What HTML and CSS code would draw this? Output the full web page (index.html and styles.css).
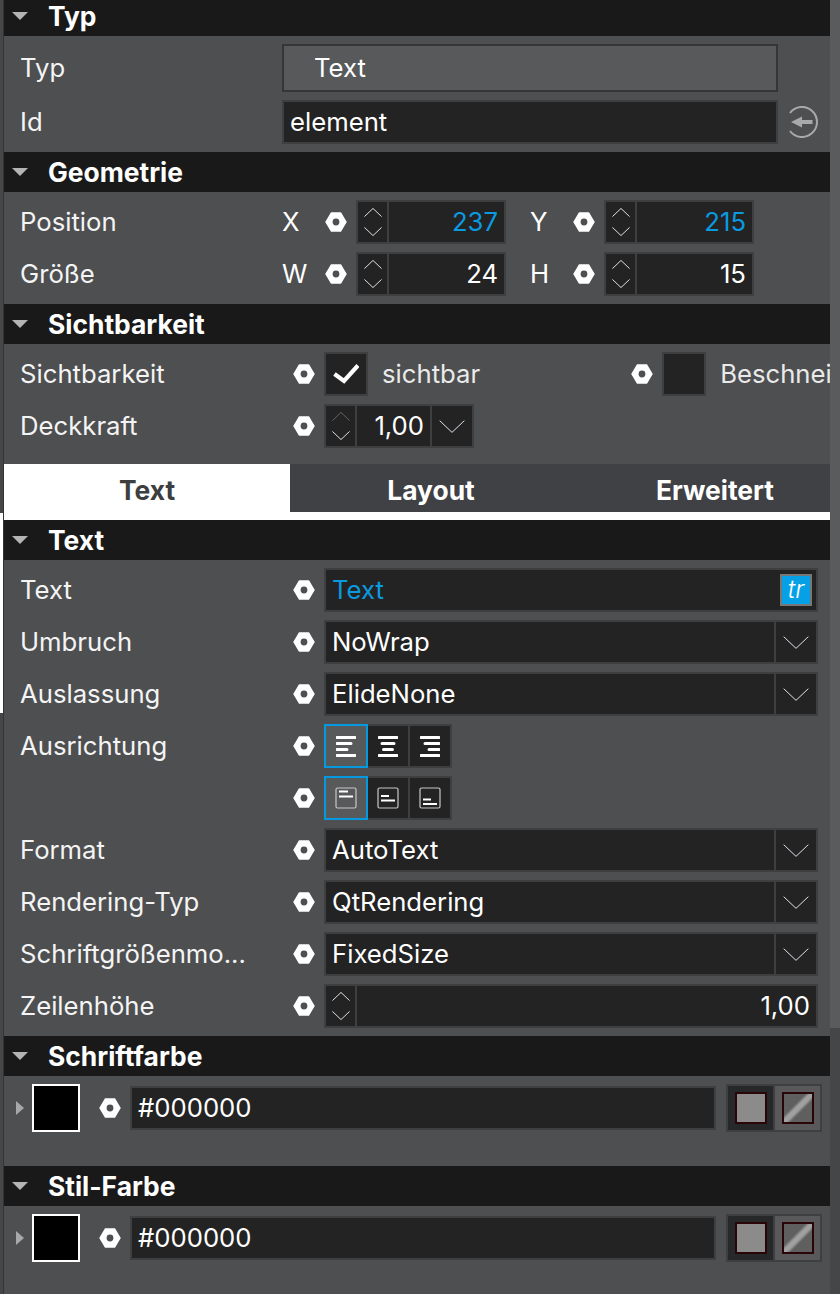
FILE: index.html
```html
<!DOCTYPE html>
<html lang="de">
<head>
<meta charset="utf-8">
<title>Eigenschaften</title>
<link rel="stylesheet" href="styles.css">
</head>
<body>
<svg class="defs" width="0" height="0" aria-hidden="true">
  <defs>
    <symbol id="hex" viewBox="0 0 22 20"><path fill-rule="evenodd" fill="#fff" d="M6 .3h10L21.8 10 16 19.7H6L.2 10zM11 6.600a3.400 3.400 0 1 0 0 6.800 3.400 3.400 0 0 0 0-6.800z"/></symbol>
    <symbol id="up" viewBox="0 0 20 10"><path fill="none" stroke="currentColor" stroke-width="1" vector-effect="non-scaling-stroke" d="M.5 9.500 10 .5l9.500 9"/></symbol>
    <symbol id="down" viewBox="0 0 20 10"><path fill="none" stroke="currentColor" stroke-width="1" vector-effect="non-scaling-stroke" d="M.5 .5l9.500 9 9.500-9"/></symbol>
    <symbol id="caret" viewBox="0 0 16 8"><path fill="#b4b4b4" d="M0 0h16L8 8z"/></symbol>
    <symbol id="side" viewBox="0 0 8 14"><path fill="#a8a8a8" d="M0 0l8 7-8 7z"/></symbol>
  </defs>
</svg>
<main class="panel">
  <section>
    <h2 class="head head-top"><svg class="caret"><use href="#caret"/></svg>Typ</h2>
    <div class="body">
      <div class="row row-type"><span class="label label-wide">Typ</span><div class="field field-type">Text</div></div>
      <div class="row"><span class="label label-wide">Id</span><div class="field field-id">element</div>
        <svg class="reset" viewBox="0 0 32 32"><path fill="none" stroke="#a9a9a9" stroke-width="2" d="M4 7A15 15 0 1 1 4 25"/><path fill="#a9a9a9" d="M5 16l11-5.500V14H26.500V18H16V21.500z"/></svg>
      </div>
    </div>
  </section>
  <section>
    <h2 class="head"><svg class="caret"><use href="#caret"/></svg>Geometrie</h2>
    <div class="body">
      <div class="row"><span class="label label-wide">Position</span>
        <span class="axis">X</span><svg class="hex"><use href="#hex"/></svg>
        <div class="spin spin-xy"><span class="arrows"><svg><use href="#up"/></svg><svg><use href="#down"/></svg></span><span class="num blue">237</span></div>
        <span class="axis axis-2">Y</span><svg class="hex"><use href="#hex"/></svg>
        <div class="spin spin-xy"><span class="arrows"><svg><use href="#up"/></svg><svg><use href="#down"/></svg></span><span class="num blue">215</span></div>
      </div>
      <div class="row"><span class="label label-wide">Größe</span>
        <span class="axis">W</span><svg class="hex"><use href="#hex"/></svg>
        <div class="spin spin-xy"><span class="arrows"><svg><use href="#up"/></svg><svg><use href="#down"/></svg></span><span class="num">24</span></div>
        <span class="axis axis-2">H</span><svg class="hex"><use href="#hex"/></svg>
        <div class="spin spin-xy"><span class="arrows"><svg><use href="#up"/></svg><svg><use href="#down"/></svg></span><span class="num">15</span></div>
      </div>
    </div>
  </section>
  <section>
    <h2 class="head"><svg class="caret"><use href="#caret"/></svg>Sichtbarkeit</h2>
    <div class="body body-vis">
      <div class="row"><span class="label">Sichtbarkeit</span><svg class="hex"><use href="#hex"/></svg>
        <div class="check"><svg viewBox="0 0 26 20"><path fill="none" stroke="#fff" stroke-width="4.200" d="M1.500 10 11 17 25 1.500"/></svg></div>
        <span class="check-label">sichtbar</span>
        <svg class="hex hex-clip"><use href="#hex"/></svg>
        <div class="check"></div>
        <span class="check-label">Beschnei</span>
      </div>
      <div class="row"><span class="label">Deckkraft</span><svg class="hex"><use href="#hex"/></svg>
        <div class="spin spin-op"><span class="arrows"><svg class="dim"><use href="#up"/></svg><svg><use href="#down"/></svg></span><span class="num">1,00</span><span class="drop"><svg><use href="#down"/></svg></span></div>
      </div>
    </div>
  </section>
  <nav class="tabs">
    <span class="tab active">Text</span><span class="tab tab-mid">Layout</span><span class="tab">Erweitert</span>
  </nav>
  <section>
    <h2 class="head"><svg class="caret"><use href="#caret"/></svg>Text</h2>
    <div class="body">
      <div class="row"><span class="label">Text</span><svg class="hex"><use href="#hex"/></svg><div class="field field-text blue">Text<span class="tr">tr</span></div></div>
      <div class="row"><span class="label">Umbruch</span><svg class="hex"><use href="#hex"/></svg><div class="combo"><span class="combo-val">NoWrap</span><span class="drop"><svg><use href="#down"/></svg></span></div></div>
      <div class="row"><span class="label">Auslassung</span><svg class="hex"><use href="#hex"/></svg><div class="combo"><span class="combo-val">ElideNone</span><span class="drop"><svg><use href="#down"/></svg></span></div></div>
      <div class="row"><span class="label">Ausrichtung</span><svg class="hex"><use href="#hex"/></svg>
        <div class="btns">
          <span class="btn on"><svg viewBox="0 0 20 21"><path d="M1 1.500h18M1 7.500h14M1 13.500h10M1 19.500h18"/></svg></span>
          <span class="btn"><svg viewBox="0 0 20 21"><path d="M1 1.500h18M4 7.500h12M5.500 13.500h9M1 19.500h18"/></svg></span>
          <span class="btn"><svg viewBox="0 0 20 21"><path d="M1 1.500h18M5 7.500h14M9 13.500h10M1 19.500h18"/></svg></span>
        </div>
      </div>
      <div class="row"><span class="label"></span><svg class="hex"><use href="#hex"/></svg>
        <div class="btns">
          <span class="btn on"><svg class="box" viewBox="0 0 22 22"><rect x="1" y="1" width="20" height="20" rx="1.500"/><path class="l" d="M4 4.500h9M4 9.500h14"/></svg></span>
          <span class="btn"><svg class="box" viewBox="0 0 22 22"><rect x="1" y="1" width="20" height="20" rx="1.500"/><path class="l" d="M4 9h8M4 13.500h14"/></svg></span>
          <span class="btn"><svg class="box" viewBox="0 0 22 22"><rect x="1" y="1" width="20" height="20" rx="1.500"/><path class="l" d="M4 12.500h8M4 17h14"/></svg></span>
        </div>
      </div>
      <div class="row"><span class="label">Format</span><svg class="hex"><use href="#hex"/></svg><div class="combo"><span class="combo-val">AutoText</span><span class="drop"><svg><use href="#down"/></svg></span></div></div>
      <div class="row"><span class="label">Rendering-Typ</span><svg class="hex"><use href="#hex"/></svg><div class="combo"><span class="combo-val">QtRendering</span><span class="drop"><svg><use href="#down"/></svg></span></div></div>
      <div class="row"><span class="label">Schriftgrößenmo...</span><svg class="hex"><use href="#hex"/></svg><div class="combo"><span class="combo-val">FixedSize</span><span class="drop"><svg><use href="#down"/></svg></span></div></div>
      <div class="row"><span class="label">Zeilenhöhe</span><svg class="hex"><use href="#hex"/></svg><div class="spin spin-full"><span class="arrows"><svg><use href="#up"/></svg><svg><use href="#down"/></svg></span><span class="num">1,00</span></div></div>
    </div>
  </section>
  <section>
    <h2 class="head"><svg class="caret"><use href="#caret"/></svg>Schriftfarbe</h2>
    <div class="body body-color">
      <div class="color-row">
        <svg class="side"><use href="#side"/></svg><span class="swatch"></span><svg class="hex hex-color"><use href="#hex"/></svg>
        <div class="field field-color">#000000</div>
        <div class="modes"><span class="mode sel"><i class="chip"></i></span><span class="mode"><i class="chip chip-grad"></i></span></div>
      </div>
    </div>
  </section>
  <section>
    <h2 class="head"><svg class="caret"><use href="#caret"/></svg>Stil-Farbe</h2>
    <div class="body body-color">
      <div class="color-row">
        <svg class="side"><use href="#side"/></svg><span class="swatch"></span><svg class="hex hex-color"><use href="#hex"/></svg>
        <div class="field field-color">#000000</div>
        <div class="modes"><span class="mode sel"><i class="chip"></i></span><span class="mode"><i class="chip chip-grad"></i></span></div>
      </div>
    </div>
  </section>
</main>
</body>
</html>
```

FILE: styles.css
```css
* { box-sizing: border-box; }
html, body { margin: 0; padding: 0; height: 1294px; overflow: hidden; }
body {
  position: relative;
  background: #454648;
  font-family: Inter, "Noto Sans", sans-serif;
  font-size: 25.7px;
  color: #fff;
}
/* window-edge slivers and the scrollbar handle that lie over the backdrop */
body::before {
  content: "";
  position: absolute;
  left: 0;
  top: 513px;
  width: 3px;
  height: 200px;
  background: #fff;
}
body::after {
  content: "";
  position: absolute;
  right: 0;
  top: 0;
  width: 10px;
  height: 1028px;
  background: #5a5b5d;
}
.defs { position: absolute; }
.panel {
  width: 827px;
  height: 1294px;
  margin-left: 3px;
  border-left: 1px solid #333436;
  background: #4e4f51;
  overflow: hidden;
}
.head {
  display: flex;
  align-items: center;
  height: 40px;
  margin: 0;
  padding-left: 8px;
  background: #191919;
  font-size: 26.4px;
  font-weight: 700;
}
.head-top { height: 36px; padding-bottom: 4px; }
.caret { width: 16px; height: 8px; margin-right: 20px; flex: none; }
.body { display: flex; flex-direction: column; gap: 8px; padding: 8px 0; }
.body-vis { padding-bottom: 16px; }
.body-color { padding: 8px 0 34px; }
.row { display: flex; align-items: center; height: 44px; padding-left: 16px; overflow: hidden; }
.row-type { height: 48px; }
.label { width: 272px; flex: none; padding-bottom: 2px; color: #f4f4f4; white-space: nowrap; }
.label-wide { width: 262px; }
.hex { width: 22px; height: 20px; flex: none; margin: 0 9px 0 1px; }
.axis { width: 42px; flex: none; padding-bottom: 2px; }
.axis-2 { margin-left: 24px; }
.field {
  display: flex;
  align-items: center;
  flex: none;
  height: 44px;
  border: 2px solid #3e3f41;
  background: #232323;
  padding: 0 0 2px 6px;
}
.field-type { width: 496px; height: 48px; padding-left: 30px; background: #58595b; border-color: #353638; }
.field-id { width: 496px; }
.reset { width: 32px; height: 32px; margin-left: 8px; flex: none; }
.field-text { width: 494px; position: relative; }
.blue { color: #0a9ae0; }
.tr {
  position: absolute;
  right: 4px;
  top: 4px;
  width: 32px;
  height: 32px;
  border: 2px solid #777;
  background: #05a0e6;
  color: #fff;
  font-style: italic;
  font-size: 25px;
  font-weight: 300;
  line-height: 26px;
  text-align: center;
}
.spin {
  display: flex;
  flex: none;
  height: 44px;
  border: 2px solid #3e3f41;
  background: #3e3f41;
  gap: 2px;
}
.spin-xy { width: 150px; }
.spin-op { width: 150px; }
.spin-full { width: 494px; }
.arrows {
  width: 29px;
  flex: none;
  background: #232323;
  display: flex;
  flex-direction: column;
  align-items: center;
  justify-content: center;
  gap: 10px;
  color: #e0e0e0;
}
.arrows svg { width: 18px; height: 9px; display: block; }
.arrows .dim { color: #666; }
.num { flex: 1; background: #232323; text-align: right; padding-right: 6px; line-height: 40px; }
.drop {
  width: 40px;
  flex: none;
  background: #232323;
  display: flex;
  align-items: center;
  justify-content: center;
  color: #dfe4ea;
}
.drop svg { width: 26px; height: 13px; display: block; }
.check {
  width: 44px;
  height: 44px;
  flex: none;
  border: 2px solid #3e3f41;
  background: #232323;
  display: flex;
  align-items: center;
  justify-content: center;
}
.check svg { width: 26px; height: 20px; }
.check-label { flex: none; margin-left: 14px; padding-bottom: 2px; color: #eaeaea; white-space: nowrap; }
.hex-clip { margin-left: 151px; }
.combo {
  display: flex;
  flex: none;
  width: 494px;
  height: 44px;
  border: 2px solid #3e3f41;
  background: #3e3f41;
  gap: 2px;
}
.combo-val { flex: 1; background: #232323; padding-left: 6px; line-height: 40px; }
.btns {
  display: flex;
  flex: none;
  height: 44px;
  width: 128px;
  border: 2px solid #3e3f41;
  background: #3e3f41;
  gap: 2px;
}
.btn {
  width: 40px;
  flex: none;
  background: #232323;
  display: flex;
  align-items: center;
  justify-content: center;
}
.btn.on { width: 44px; height: 44px; margin: -2px; border: 2px solid #059ae0; background: #58595b; }
.btn svg { width: 20px; height: 21px; fill: none; stroke: #fff; stroke-width: 3; stroke-linecap: round; }
.btn .box { width: 22px; height: 22px; stroke-width: 1.2; stroke: #c8c8c8; }
.btn .box .l { stroke: #fff; stroke-width: 2; stroke-linecap: butt; }
.color-row { display: flex; align-items: center; height: 48px; padding-left: 12px; }
.side { width: 8px; height: 14px; flex: none; margin-right: 8px; }
.swatch { width: 48px; height: 48px; flex: none; background: #000; border: 2px solid #fff; }
.hex-color { margin: 0 9px 0 19px; }
.field-color { width: 586px; }
.modes {
  display: flex;
  flex: none;
  gap: 2px;
  margin-left: 10px;
  width: 96px;
  height: 48px;
  border: 2px solid #3e3f41;
  background: #3e3f41;
}
.mode { flex: 1; display: flex; align-items: center; justify-content: center; background: #59595b; }
.mode.sel { background: #27282a; }
.chip { display: block; width: 32px; height: 32px; background: #8b8b8b; border: 2px solid #2a0508; }
.chip-grad { background: linear-gradient(135deg, #5f5f5f 0 38%, #a0a0a0 46% 54%, #5f5f5f 62%); }
.tabs { display: flex; height: 56px; background: #fff; padding-bottom: 8px; overflow: hidden; }
.tab {
  width: 286px;
  flex: none;
  display: flex;
  align-items: center;
  justify-content: center;
  padding-top: 4px;
  background: #404144;
  font-size: 26.4px;
  font-weight: 700;
}
.tab-mid { width: 282px; }
.tab.active { background: #fff; color: #3d3e40; }
```
